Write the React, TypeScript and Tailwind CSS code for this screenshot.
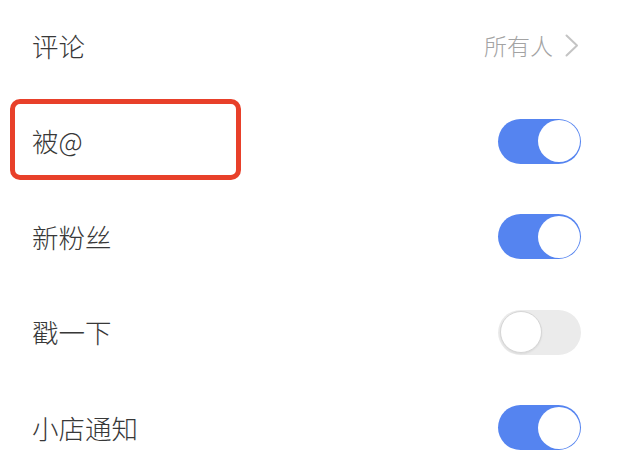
import React from 'react';

type Row = { label: string; kind: 'link' | 'toggle'; on?: boolean; value?: string; marked?: boolean };

const ROWS: Row[] = [
  { label: '评论', kind: 'link', value: '所有人' },
  { label: '被@', kind: 'toggle', on: true, marked: true },
  { label: '新粉丝', kind: 'toggle', on: true },
  { label: '戳一下', kind: 'toggle', on: false },
  { label: '小店通知', kind: 'toggle', on: true },
];

function Toggle({ on }: { on: boolean }) {
  return (
    <div
      className={`flex h-[45px] w-[83px] items-center rounded-full px-[1.5px] ${
        on ? 'justify-end bg-[#5584f0]' : 'justify-start bg-[#ebebeb]'
      }`}
    >
      <div
        className={`h-[42px] w-[42px] rounded-full bg-white ${
          on ? '' : 'border border-[#d6d6d6] shadow-[0_1px_2px_rgba(0,0,0,0.08)]'
        }`}
      />
    </div>
  );
}

export default function App() {
  return (
    <div
      className="h-[472px] w-[618px] overflow-hidden bg-white"
      style={{ fontFamily: '"Noto Sans CJK SC", "Noto Sans", sans-serif' }}
    >
      <div className="-mt-[2px]">
        {ROWS.map((row) => (
          <div
            key={row.label}
            className={`relative flex h-[95.5px] items-center justify-between pl-[32px] ${
              row.kind === 'link' ? 'pr-[39px]' : 'pr-[37px]'
            }`}
          >
            {row.marked ? (
              <div className="pointer-events-none absolute left-[10px] top-[5px] h-[81px] w-[231px] rounded-[10px] border-[5px] border-[#e8402a]" />
            ) : null}
            <span className="text-[26.5px] font-light leading-none text-[#383838]">{row.label}</span>
            {row.kind === 'toggle' ? (
              <Toggle on={!!row.on} />
            ) : (
              <div className="flex items-center gap-[12px] text-[#a3a3a3]">
                <span className="text-[23px] font-light leading-none">{row.value}</span>
                <svg width="14" height="23" viewBox="0 0 14 23" fill="none">
                  <path d="M1.5 1.5 L12 11.5 L1.5 21.5" stroke="#c4c4c4" strokeWidth="2" strokeLinecap="round" strokeLinejoin="round" />
                </svg>
              </div>
            )}
          </div>
        ))}
      </div>
    </div>
  );
}
